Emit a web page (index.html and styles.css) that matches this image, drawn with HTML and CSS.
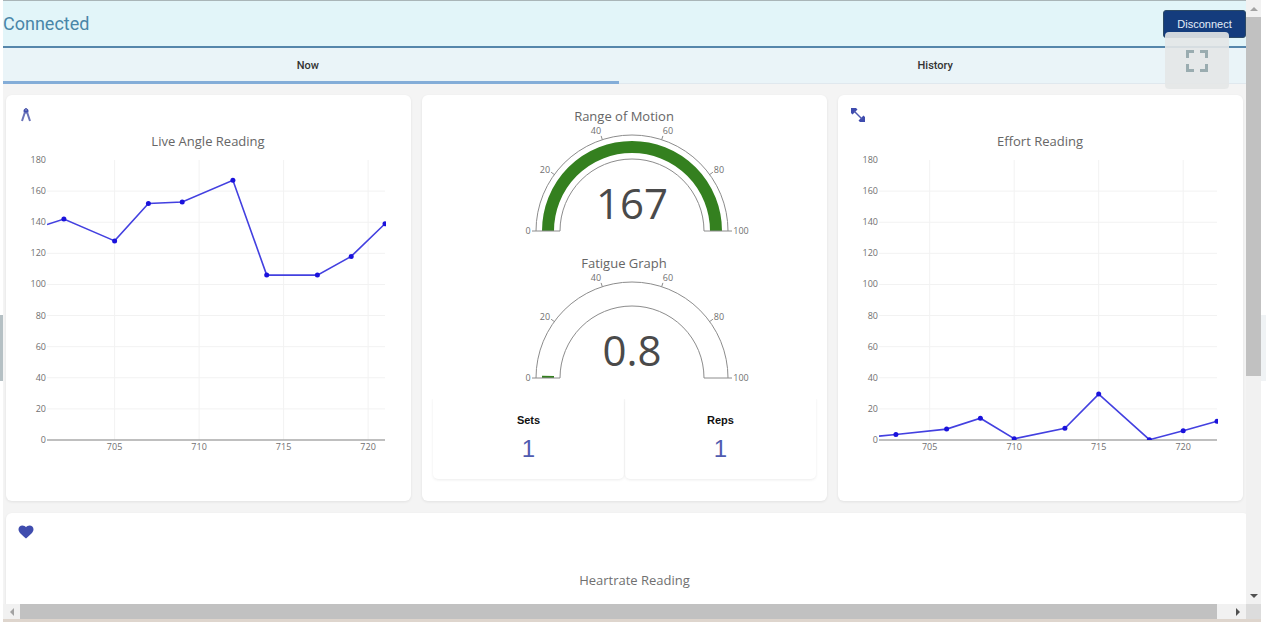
FILE: index.html
```html
<!DOCTYPE html>
<html lang="en">
<head>
    <meta charset="UTF-8">
    <meta name="viewport" content="width=device-width, initial-scale=1.0">
    <title>Live Readings</title>
    <link rel="stylesheet" href="styles.css">
</head>
<body>
    <button class="slide-handle prev" aria-label="Previous"></button>
    <button class="slide-handle next" aria-label="Next"></button>

    <div class="viewer">
        <main class="content">
            <header class="topbar">
                <h1>Connected</h1>
                <button class="disconnect-btn">Disconnect</button>
            </header>

            <nav class="tabs">
                <button class="tab active">Now</button>
                <button class="tab">History</button>
            </nav>

            <div class="cards">
                <section class="card">
                    <svg class="card-icon" viewBox="0 0 16 16">
                        <circle cx="8" cy="4" r="2.500" />
                        <path class="leg" d="M8 1v3M7 5L4 14M9 5l3 9" />
                    </svg>
                    <svg class="chart" id="angle-chart" viewBox="0 0 405 370"></svg>
                </section>

                <section class="card">
                    <svg class="chart" id="motion-gauge" viewBox="0 0 405 147"></svg>
                    <svg class="chart" id="fatigue-gauge" viewBox="0 0 405 147"></svg>
                    <div class="counters">
                        <div class="counter">
                            <h2>Sets</h2>
                            <p>1</p>
                        </div>
                        <div class="counter">
                            <h2>Reps</h2>
                            <p>1</p>
                        </div>
                    </div>
                </section>

                <section class="card">
                    <svg class="card-icon" viewBox="0 0 16 16">
                        <path d="M1 1h5l1.500 1.500-5 5L1 6zM15 15h-5l-1.500-1.500 5-5L15 10z" />
                        <path class="line" d="M4 4l8 8" />
                    </svg>
                    <svg class="chart" id="effort-chart" viewBox="0 0 405 370"></svg>
                </section>

                <section class="card heart-card">
                    <svg class="card-icon" viewBox="0 0 16 16">
                        <path d="M8 13.500C4 10 .500 7.500.500 4.300.500 2 2.300.500 4.400.500 6 .500 7.300 1.200 8 2.300c.7-1.100 2-1.800 3.600-1.800 2.100 0 3.900 1.500 3.900 3.800C15.500 7.500 12 10 8 13.500z" />
                    </svg>
                    <h2 class="chart-title">Heartrate Reading</h2>
                </section>
            </div>
        </main>

        <div class="scroll-y">
            <span class="arrow up"></span>
            <div class="track"><div class="thumb"></div></div>
            <span class="arrow down"></span>
        </div>
        <div class="scroll-x">
            <span class="arrow left"></span>
            <div class="track"><div class="thumb"></div></div>
            <span class="arrow right"></span>
        </div>
        <div class="scroll-corner"></div>

        <button class="fullscreen-btn" aria-label="Full screen">
            <svg viewBox="0 0 22 22">
                <path d="M1.500 8V1.500H8M14 1.500h6.500V8M20.500 14v6.500H14M8 20.500H1.500V14" />
            </svg>
        </button>
    </div>

    <script src="script.js"></script>
</body>
</html>
```
FILE: styles.css
```css
* {
    margin: 0;
    padding: 0;
    box-sizing: border-box;
}

body {
    font-family: Roboto, "Liberation Sans", sans-serif;
    background-color: #fff;
    height: 100vh;
    padding: 0 5px 4px 3px;
    overflow: hidden;
    position: relative;
}

button {
    border: none;
    font-family: inherit;
    cursor: pointer;
}

.viewer {
    position: relative;
    display: grid;
    grid-template-columns: 1fr 15px;
    grid-template-rows: 1fr 15px;
    height: 100%;
    border-bottom: 3px solid #ded5cd;
}

.content {
    background-color: #f4f4f4;
    overflow: hidden;
}

/* Header */
.topbar {
    display: flex;
    justify-content: space-between;
    align-items: center;
    height: 48px;
    background-color: #e2f5f9;
    border-top: 1px solid #a9b5b8;
    border-bottom: 2px solid #5586ab;
}

.topbar h1 {
    font-size: 18px;
    font-weight: 400;
    color: #4a86a8;
}

.disconnect-btn {
    width: 83px;
    height: 28px;
    background-color: #143c7d;
    border: 1px solid #2c4a66;
    border-radius: 3px;
    color: #e4eefa;
    font-family: "Liberation Sans", sans-serif;
    font-size: 11px;
    font-weight: 500;
}

.tabs {
    display: grid;
    grid-template-columns: 1fr 1fr;
    height: 36px;
    margin-left: -12px;
    background-color: #eaf4f8;
}

.tab {
    background: none;
    padding-left: 6px;
    border-bottom: 1px solid #e0e8ee;
    color: #333;
    font-size: 11px;
    font-weight: 500;
}

.tab.active {
    padding-top: 2px;
    border-bottom: 3px solid #84add8;
}

/* Cards */
.cards {
    display: grid;
    grid-template-columns: repeat(3, 1fr);
    gap: 12px 11px;
    padding: 11px 3px 0;
}

.card {
    background-color: #fff;
    border-radius: 6px;
    box-shadow: 0 1px 3px rgba(0, 0, 0, 0.08);
}

.heart-card {
    grid-column: 1 / -1;
    height: 180px;
    margin-right: -6px;
}

.card-icon {
    display: block;
    width: 16px;
    height: 16px;
    margin: 12px 12px 8px;
    fill: #3f4cae;
}

.card-icon .line,
.card-icon .leg {
    fill: none;
    stroke: #4d58b0;
    stroke-width: 1.5;
}

.card-icon .leg {
    stroke: #6a73b8;
    stroke-width: 2;
}

.chart {
    display: block;
    width: 100%;
    font-family: "Open Sans", sans-serif;
}

.chart-title {
    padding: 22px 0 0 14px;
    font-family: "Open Sans", sans-serif;
    font-size: 13px;
    font-weight: 400;
    text-align: center;
    color: #707070;
}

.title {
    font-size: 13px;
    text-anchor: middle;
    fill: #666;
}

.tick {
    font-size: 9px;
    text-anchor: middle;
    fill: #707070;
}

.tick.end {
    text-anchor: end;
}

.grid {
    stroke: #f2f2f2;
}

.axis {
    stroke: #aaa;
    stroke-width: 1.5;
}

.series {
    fill: none;
    stroke: #4340e0;
    stroke-width: 1.6;
}

.point {
    fill: #1a12dc;
}

.gauge-outline {
    fill: none;
    stroke: #8c8c8c;
}

.gauge-bar {
    fill: none;
    stroke: #34801f;
    stroke-width: 12;
}

.gauge-value {
    font-size: 42px;
    text-anchor: middle;
    fill: #4a4a4a;
}

/* Sets and reps */
.counters {
    display: grid;
    grid-template-columns: 1fr 1fr;
    gap: 1px;
    margin: 6px 11px 22px;
}

.counter {
    height: 84px;
    padding-top: 18px;
    border-radius: 5px;
    box-shadow: 0 1px 3px rgba(0, 0, 0, 0.08);
    clip-path: inset(4px -4px -4px -4px);
    font-family: "Liberation Sans", sans-serif;
    text-align: center;
}

.counter h2 {
    font-size: 11px;
    line-height: 14px;
    color: #111;
}

.counter p {
    margin-top: 8px;
    font-size: 24px;
    line-height: 28px;
    color: #4f5bb0;
}

/* Scrollbars */
.scroll-y,
.scroll-x {
    display: flex;
    background-color: #f1f1f1;
}

.scroll-y {
    flex-direction: column;
}

.arrow {
    display: flex;
    flex: 0 0 17px;
    align-items: center;
    justify-content: center;
}

.arrow::before {
    content: "";
    border: 4px solid transparent;
}

.arrow.up::before {
    border-top: 0;
    border-bottom-color: #a3a3a3;
}

.arrow.down::before {
    border-bottom: 0;
    border-top-color: #505050;
}

.arrow.left::before {
    border-left: 0;
    border-right-color: #a3a3a3;
}

.arrow.right::before {
    border-right: 0;
    border-left-color: #505050;
}

.track {
    flex: 1;
}

.thumb {
    background-color: #c1c1c1;
}

.scroll-y .thumb {
    height: 63%;
}

.scroll-x .thumb {
    width: 99%;
    height: 100%;
}

.scroll-corner {
    background-color: #dcdcdc;
}

/* Overlay controls */
.fullscreen-btn {
    position: absolute;
    top: 32px;
    right: 32px;
    width: 64px;
    height: 57px;
    background-color: rgba(228, 231, 231, 0.9);
    border-radius: 4px;
}

.fullscreen-btn svg {
    display: block;
    width: 22px;
    height: 22px;
    margin: 0 auto;
    fill: none;
    stroke: #9aacb0;
    stroke-width: 3;
}

.slide-handle {
    position: absolute;
    top: 315px;
    height: 66px;
}

.slide-handle.prev {
    left: 0;
    width: 3px;
    background-color: #b5c0c4;
}

.slide-handle.next {
    right: 0;
    width: 5px;
    background-color: #f0f3f5;
}
```
FILE: script.js
```js
// Plot area shared by both line charts
const plot = { left: 41, top: 29, width: 338, height: 280 };
const maxY = 180;

const angleData = [
    [701, 138.5], [702, 142], [705, 128], [707, 152], [709, 153],
    [712, 167], [714, 106], [717, 106], [719, 118], [721, 139]
];

const effortData = [
    [702, 2.5], [703, 3.5], [706, 7], [708, 14], [710, 0.8],
    [713, 7.5], [715, 29.5], [718, 0.2], [720, 6], [722, 12]
];

function drawLineChart(id, title, data) {
    const startX = data[0][0];
    const bottom = plot.top + plot.height;
    const right = plot.left + plot.width;
    const scaleX = value => plot.left + (value - startX) * plot.width / 20;
    const scaleY = value => bottom - value * plot.height / maxY;

    let svg = `<clipPath id="${id}-clip"><rect x="${plot.left}" y="${plot.top}" width="${plot.width + 1}" height="${plot.height}"/></clipPath>`;
    svg += `<text class="title" x="202" y="15">${title}</text>`;

    for (let x = 705; x <= 720; x += 5) {
        svg += `<line class="grid" x1="${scaleX(x)}" x2="${scaleX(x)}" y1="${plot.top}" y2="${bottom}"/>`;
        svg += `<text class="tick" x="${scaleX(x)}" y="${bottom + 10}">${x}</text>`;
    }

    for (let y = 0; y <= maxY; y += 20) {
        if (y > 0 && y < maxY) {
            svg += `<line class="grid" x1="${plot.left}" x2="${right}" y1="${scaleY(y)}" y2="${scaleY(y)}"/>`;
        }
        svg += `<text class="tick end" x="${plot.left - 1}" y="${scaleY(y) + 3}">${y}</text>`;
    }
    svg += `<line class="axis" x1="${plot.left}" x2="${right}" y1="${bottom}" y2="${bottom}"/>`;

    const points = data.map(([x, y]) => `${scaleX(x)},${scaleY(y)}`).join(" ");
    svg += `<g clip-path="url(#${id}-clip)"><polyline class="series" points="${points}"/>`;
    data.slice(1).forEach(([x, y]) => {
        svg += `<circle class="point" cx="${scaleX(x)}" cy="${scaleY(y)}" r="2.5"/>`;
    });
    svg += "</g>";

    document.getElementById(id).innerHTML = svg;
}

function drawGauge(id, title, value) {
    const cx = 210;
    const cy = 136;
    const at = (percent, radius) => {
        const angle = Math.PI * (1 - percent / 100);
        return [cx + radius * Math.cos(angle), cy - radius * Math.sin(angle)];
    };
    const filled = Math.min(value, 100);

    let svg = `<text class="title" x="202" y="26">${title}</text>`;
    svg += `<path class="gauge-bar" d="M${at(0, 84)} A84 84 0 0 1 ${at(filled, 84)}"/>`;
    svg += `<path class="gauge-outline" d="M${at(0, 96)} A96 96 0 0 1 ${at(100, 96)} L${at(100, 72)} A72 72 0 0 0 ${at(0, 72)} Z"/>`;

    const labels = { 0: [106, 139], 20: [123, 78], 40: [174, 39], 60: [246, 39], 80: [297, 78], 100: [319, 139] };
    for (const percent in labels) {
        const [x, y] = labels[percent];
        svg += `<path class="gauge-outline" d="M${at(percent, 96)} L${at(percent, 100)}"/>`;
        svg += `<text class="tick" x="${x}" y="${y}">${percent}</text>`;
    }
    svg += `<text class="gauge-value" x="${cx}" y="124">${value}</text>`;

    document.getElementById(id).innerHTML = svg;
}

drawLineChart("angle-chart", "Live Angle Reading", angleData);
drawLineChart("effort-chart", "Effort Reading", effortData);
drawGauge("motion-gauge", "Range of Motion", 167);
drawGauge("fatigue-gauge", "Fatigue Graph", 0.8);
```
